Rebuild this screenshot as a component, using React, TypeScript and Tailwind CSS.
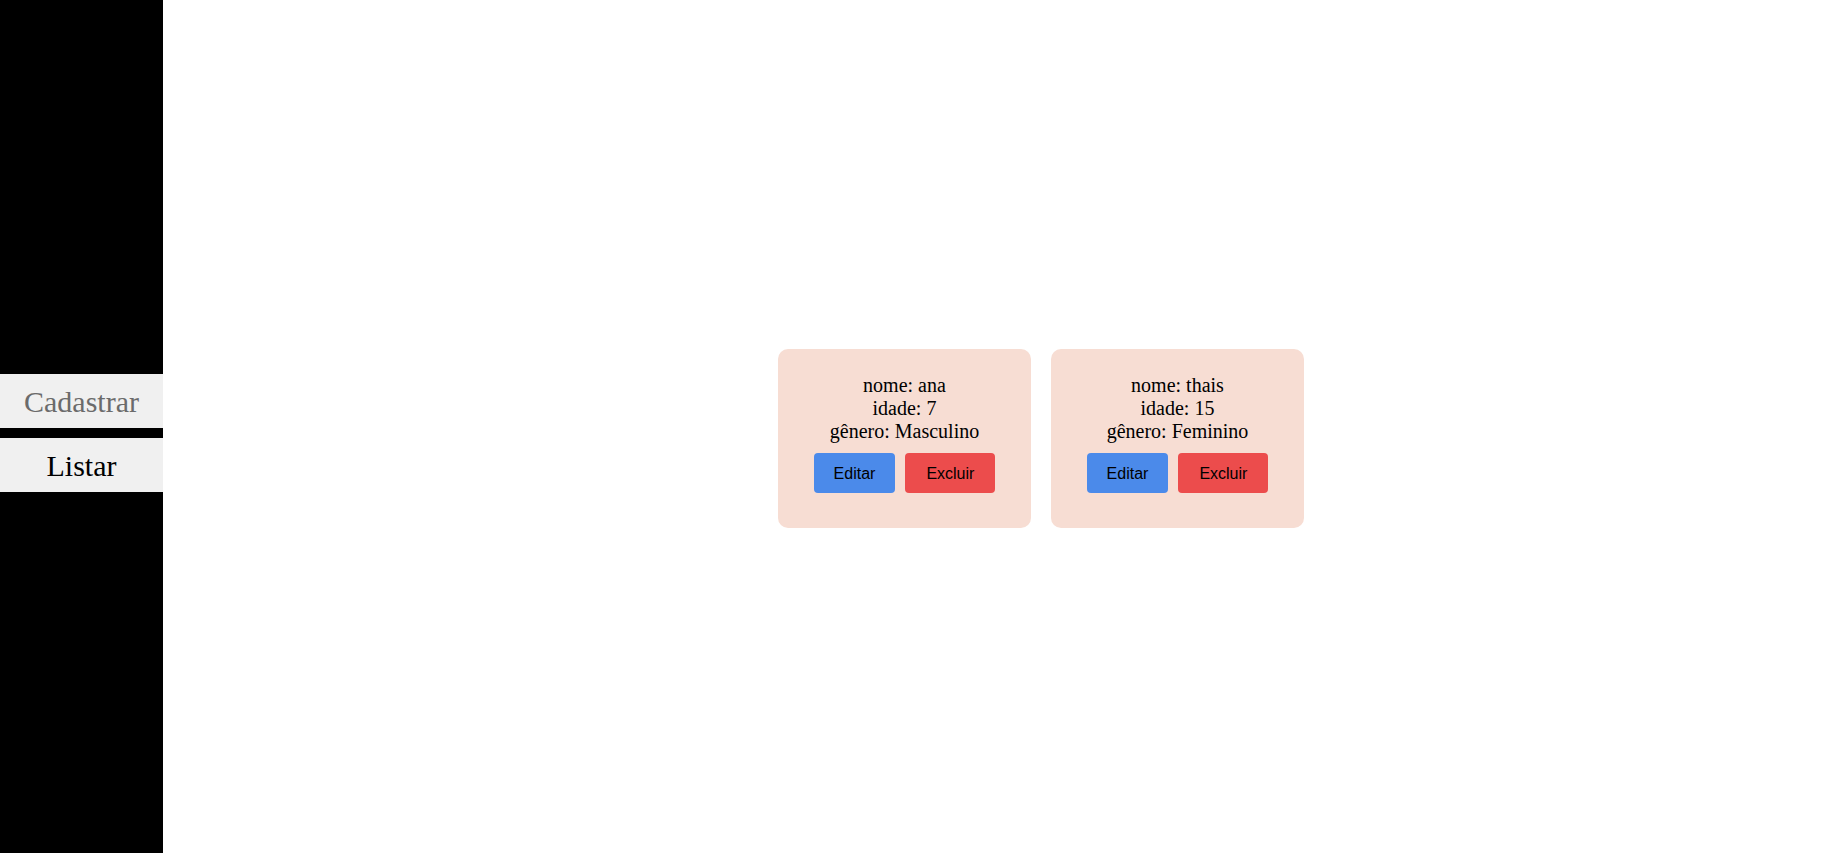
const pessoas = [
  { id: 1, nome: "ana", idade: 7, genero: "Masculino" },
  { id: 2, nome: "thais", idade: 15, genero: "Feminino" },
];

const App = () => {
  return (
    <div className="flex h-[853px] w-full bg-white font-['Liberation_Serif',serif]">
      <div className="flex w-[163px] shrink-0 flex-col justify-center gap-[10px] bg-black pt-[13px]">
        <button className="h-[54px] w-full bg-[#f0f0f0] text-[30px] text-[#6b6b6b]">
          Cadastrar
        </button>
        <button className="h-[54px] w-full bg-[#f0f0f0] text-[30px] text-black">
          Listar
        </button>
      </div>
      <div className="flex flex-1 items-start pl-[615px] pt-[349px]">
        <div className="flex gap-[20px]">
          {pessoas.map((pessoa) => (
            <div
              key={pessoa.id}
              className="flex w-[253px] flex-col items-center rounded-[10px] bg-[#f7ddd3] pt-[25px] pb-[35px] text-[20px] leading-[23px] text-black"
            >
              <p>nome: {pessoa.nome}</p>
              <p>idade: {pessoa.idade}</p>
              <p>gênero: {pessoa.genero}</p>
              <div className="mt-[10px] flex gap-[10px] font-['Liberation_Sans',sans-serif] text-[16px]">
                <button className="h-[40px] rounded-[4px] bg-[#4b8aea] px-[20px]">
                  Editar
                </button>
                <button className="h-[40px] rounded-[4px] bg-[#ec4c4c] px-[21px]">
                  Excluir
                </button>
              </div>
            </div>
          ))}
        </div>
      </div>
    </div>
  );
};

export default App;
